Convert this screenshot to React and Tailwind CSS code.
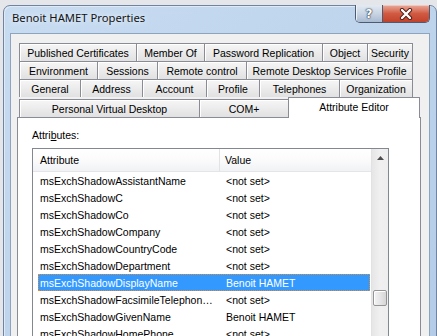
const tabRows = [
  [
    ["Published Certificates", "w-[117px]"],
    ["Member Of", "w-[68px]"],
    ["Password Replication", "w-[118px]"],
    ["Object", "w-[45px]"],
    ["Security", "w-[46px]"],
  ],
  [
    ["Environment", "w-[78px]"],
    ["Sessions", "w-[60px]"],
    ["Remote control", "w-[89px]"],
    ["Remote Desktop Services Profile", "w-[167px]"],
  ],
  [
    ["General", "w-[61px]"],
    ["Address", "w-[62px]"],
    ["Account", "w-[64px]"],
    ["Profile", "w-[53px]"],
    ["Telephones", "w-[80px]"],
    ["Organization", "w-[74px]"],
  ],
];

const rows = [
  ["msExchShadowAssistantName", "<not set>"],
  ["msExchShadowC", "<not set>"],
  ["msExchShadowCo", "<not set>"],
  ["msExchShadowCompany", "<not set>"],
  ["msExchShadowCountryCode", "<not set>"],
  ["msExchShadowDepartment", "<not set>"],
  ["msExchShadowDisplayName", "Benoit HAMET", true],
  ["msExchShadowFacsimileTelephoneNumber", "<not set>"],
  ["msExchShadowGivenName", "Benoit HAMET"],
  ["msExchShadowHomePhone", "<not set>"],
];

function Tab({ label, w, last }) {
  return (
    <div
      className={`${w} h-[18px] flex items-center justify-center border-t border-l ${
        last ? "border-r" : ""
      } border-[#898c95] bg-linear-to-b from-[#f6f6f6] to-[#e1e1e1] shadow-[inset_1px_1px_0_#ffffff] whitespace-nowrap`}
    >
      {label}
    </div>
  );
}

export default function App() {
  return (
    <div className="w-[437px] h-[336px] overflow-hidden bg-[#e4e6e9] font-['Liberation_Sans',Arial,sans-serif] text-[10.5px] leading-[12px] text-black">
      <div className="ml-[3px] mt-[5px] w-[434px] h-[340px] rounded-t-[7px] border border-[#70849f] bg-linear-to-br from-[#c8dcf1] via-[#bdd4ec] to-[#b4cce8] px-[6px] shadow-[inset_1px_1px_0_#dfeaf6]">
        {/* title bar */}
        <div className="h-[27px] flex items-start">
          <div className="pl-[2px] pt-[5px] text-[11.25px] leading-[14px] font-['Noto_Sans',sans-serif] text-[#141414] [text-shadow:0_0_6px_#ffffff]">
            Benoit HAMET Properties
          </div>
          <div className="ml-auto -mt-px flex w-[75px] h-[18px] rounded-b-[5px] border border-t-0 border-[#4d5a70] overflow-hidden">
            <div className="w-[26px] h-full flex items-center justify-center bg-linear-to-b from-[#e3eaf3] via-[#c9d5e4] to-[#a9bad0] shadow-[inset_1px_0_0_#eef3f9]">
              <span className="font-['DejaVu_Sans',sans-serif] font-bold text-[12px] leading-[12px] text-white [text-shadow:0_0_1px_#2f3b52,0_0_1px_#2f3b52,0_0_2px_#2f3b52]">
                ?
              </span>
            </div>
            <div className="w-[47px] h-full border-l border-[#4d5a70] flex items-center justify-center bg-linear-to-b from-[#e9aa9a] via-[#d15a43] to-[#c2412a] shadow-[inset_0_1px_0_#f3c7bb]">
              <svg width="14" height="12" viewBox="0 0 14 12">
                <path d="M3 2 L11 10 M11 2 L3 10" stroke="#4a1d14" strokeWidth="4.2" strokeLinecap="round" fill="none" />
                <path d="M3 2 L11 10 M11 2 L3 10" stroke="#ffffff" strokeWidth="2.4" strokeLinecap="round" fill="none" />
              </svg>
            </div>
          </div>
        </div>

        {/* client area */}
        <div className="h-[400px] border border-[#8ea3bd] bg-[#f0f0f0] pt-[9px] pl-[6px]">
          <div className="w-[404px]">
            {tabRows.map((r, i) => (
              <div key={i} className="ml-[2px] flex">
                {r.map(([label, w], j) => (
                  <Tab key={label} label={label} w={w} last={j === r.length - 1} />
                ))}
              </div>
            ))}
            <div className="ml-[2px] flex items-end">
              <Tab label="Personal Virtual Desktop" w="w-[180px]" />
              <Tab label="COM+" w="w-[89px]" />
              <div className="relative z-10 -mb-px w-[132px] h-[21px] pb-[3px] flex items-center justify-center border-t border-l border-r border-[#898c95] bg-white">
                Attribute Editor
              </div>
            </div>

            {/* panel */}
            <div className="h-[260px] border border-[#898c95] bg-white pt-[10px] pl-[14px]">
              <div className="h-[15px] leading-[15px]">
                Attri<span className="underline underline-offset-1">b</span>utes:
              </div>
              <div className="mt-[5px] w-[357px] h-[200px] border border-[#828790] flex">
                <div className="w-[338px]">
                  <div className="h-[23px] flex border-b border-[#e3e5e8] bg-linear-to-b from-[#ffffff] via-[#fbfbfc] to-[#f1f2f4]">
                    <div className="w-[187px] border-r border-[#e2e3e5] pl-[7px] flex items-center">
                      Attribute
                    </div>
                    <div className="pl-[5px] flex items-center">Value</div>
                  </div>
                  <div>
                    {rows.map(([a, v, sel]) => (
                      <div
                        key={a}
                        className={`ml-[5px] w-[332px] h-[17px] flex items-center ${
                          sel
                            ? "bg-[#3399ff] text-white border border-dotted border-[#e38a2c]"
                            : "border border-transparent"
                        }`}
                      >
                        <div className="w-[183px] pl-[1px] pr-[6px] truncate">{a}</div>
                        <div className="pl-[4px] whitespace-nowrap">{v}</div>
                      </div>
                    ))}
                  </div>
                </div>
                {/* scrollbar */}
                <div className="w-[17px] bg-linear-to-r from-[#e6e6e6] via-[#f0f0f0] to-[#eeeeee] border-l border-[#e2e2e2] flex flex-col">
                  <div className="h-[17px] flex items-center justify-center">
                    <svg width="7" height="4" viewBox="0 0 7 4">
                      <path d="M0 4 L3.5 0 L7 4 Z" fill="#4d4d4d" />
                    </svg>
                  </div>
                  <div className="h-[124px]" />
                  <div className="mx-[1px] h-[16px] rounded-[2px] border border-[#959595] bg-linear-to-r from-[#f3f3f3] via-[#e6e6e6] to-[#d6d6d6] shadow-[inset_1px_1px_0_#ffffff]" />
                </div>
              </div>
            </div>
          </div>
        </div>
      </div>
    </div>
  );
}
